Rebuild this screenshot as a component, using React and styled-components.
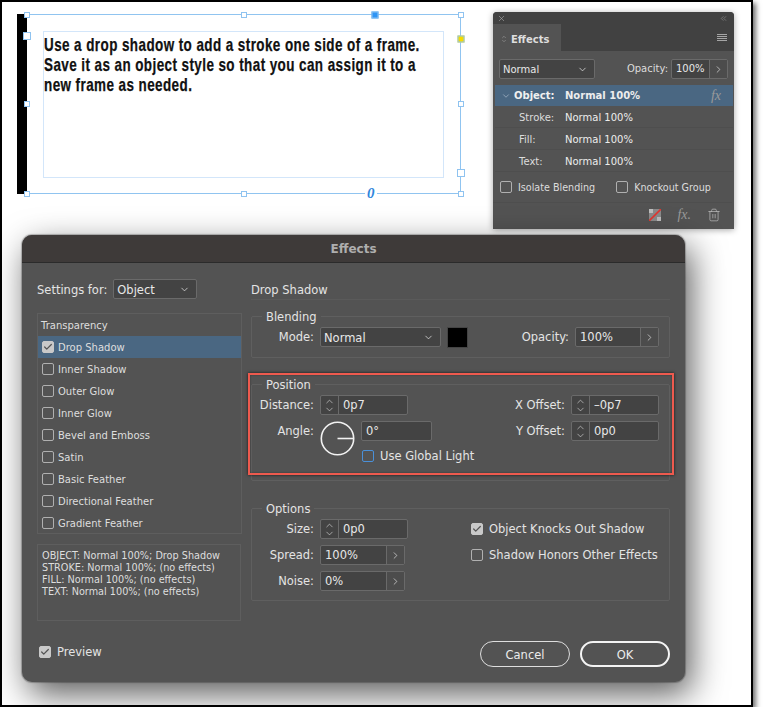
import React from 'react';
import styled, { createGlobalStyle } from 'styled-components';
import { ChevronDown, ChevronUp, ChevronRight, Check, Trash2, X, ChevronsLeft } from 'lucide-react';

const GlobalStyle = createGlobalStyle`
    html, body {
        margin: 0;
        padding: 0;
        background: #ffffff;
        overflow: hidden;
    }
    * {
        box-sizing: border-box;
    }
`;

const HANDLES = [
    { x: 0, y: 0 }, { x: 217, y: 0 }, { x: 434, y: 0 },
    { x: 0, y: 89 }, { x: 434, y: 89 },
    { x: 0, y: 179 }, { x: 217, y: 179 }, { x: 434, y: 179 },
    { x: 0, y: 21, size: 8 }, { x: 434, y: 158, size: 8 },
    { x: 348, y: 0, size: 7, fill: '#2f95f5' },
    { x: 434, y: 24, size: 7, fill: '#f5dc00' },
];

const EFFECT_ROWS = [
    { label: 'Drop Shadow', checked: true },
    { label: 'Inner Shadow' },
    { label: 'Outer Glow' },
    { label: 'Inner Glow' },
    { label: 'Bevel and Emboss' },
    { label: 'Satin' },
    { label: 'Basic Feather' },
    { label: 'Directional Feather' },
    { label: 'Gradient Feather' },
];

const Box = ({ checked, blue }) => (
    <CheckBox $checked={checked} $blue={blue}>
        {checked && <Check size={10} strokeWidth={3} color="#555" />}
    </CheckBox>
);

const Spinner = ({ value, width = 88 }) => (
    <FieldShell $width={width}>
        <SpinButtons>
            <ChevronUp size={11} strokeWidth={1.3} />
            <ChevronDown size={11} strokeWidth={1.3} />
        </SpinButtons>
        <FieldValue>{value}</FieldValue>
    </FieldShell>
);

const PercentField = ({ value, width, arrow = 18 }) => (
    <FieldShell $width={width}>
        <FieldValue>{value}</FieldValue>
        <ArrowButton $width={arrow}>
            <ChevronRight size={11} strokeWidth={1.5} />
        </ArrowButton>
    </FieldShell>
);

const Select = ({ value, width }) => (
    <SelectShell $width={width}>
        <span>{value}</span>
        <ChevronDown size={11} strokeWidth={1.6} />
    </SelectShell>
);

const App = () => {
    return (
        <>
            <GlobalStyle />
            <Frame>
                <TopRow>
                    <DocArea>
                        <StrokeBar />
                        <DocFrame>
                            <TextFrame>
                                <TextLine>Use a drop shadow to add a stroke one side of a frame.</TextLine>
                                <TextLine>Save it as an object style so that you can assign it to a</TextLine>
                                <TextLine>new frame as needed.</TextLine>
                            </TextFrame>
                            {HANDLES.map((h, i) => (
                                <Handle key={i} $x={h.x} $y={h.y} $size={h.size || 6} $fill={h.fill} />
                            ))}
                            <Overflow>0</Overflow>
                        </DocFrame>
                    </DocArea>

                    <Panel>
                        <PanelBar>
                            <X size={9} strokeWidth={1.5} />
                            <ChevronsLeft size={9} strokeWidth={1.2} />
                        </PanelBar>
                        <TabRow>
                            <Tab>
                                <TabSpin>
                                    <ChevronUp size={6} strokeWidth={2} />
                                    <ChevronDown size={6} strokeWidth={2} />
                                </TabSpin>
                                Effects
                            </Tab>
                            <MenuIcon><i /><i /><i /><i /></MenuIcon>
                        </TabRow>
                        <PanelControls>
                            <Select value="Normal" width={96} />
                            <OpacityLabel>Opacity:</OpacityLabel>
                            <PercentField value="100%" width={57} arrow={18} />
                        </PanelControls>
                        <LayerRow $active>
                            <ChevronDown size={10} strokeWidth={1.5} />
                            <LayerName $active>Object:</LayerName>
                            <LayerValue $active>Normal 100%</LayerValue>
                            <FxMark>fx</FxMark>
                        </LayerRow>
                        <LayerRow><LayerName $indent>Stroke:</LayerName><LayerValue>Normal 100%</LayerValue></LayerRow>
                        <LayerRow><LayerName $indent>Fill:</LayerName><LayerValue>Normal 100%</LayerValue></LayerRow>
                        <LayerRow><LayerName $indent>Text:</LayerName><LayerValue>Normal 100%</LayerValue></LayerRow>
                        <PanelChecks>
                            <CheckLine><Box /><span>Isolate Blending</span></CheckLine>
                            <CheckLine><Box /><span>Knockout Group</span></CheckLine>
                        </PanelChecks>
                        <PanelFooter>
                            <svg width="12" height="12" viewBox="0 0 12 12">
                                <rect width="12" height="12" fill="#8a8a8a" />
                                <rect x="0" y="0" width="4" height="4" fill="#bdbdbd" />
                                <rect x="8" y="8" width="4" height="4" fill="#bdbdbd" />
                                <path d="M0 12 L12 0" stroke="#e0352f" strokeWidth="1.6" />
                            </svg>
                            <FxMark $footer>fx.</FxMark>
                            <Trash2 size={14} strokeWidth={1.2} color="#bdbdbd" />
                        </PanelFooter>
                    </Panel>
                </TopRow>

                <Dialog>
                    <TitleBar>Effects</TitleBar>
                    <DialogBody>
                        <LeftColumn>
                            <SettingsRow>
                                <SettingsLabel>Settings for:</SettingsLabel>
                                <Select value="Object" width={84} />
                            </SettingsRow>
                            <EffectList>
                                <ListHeader>Transparency</ListHeader>
                                {EFFECT_ROWS.map((row) => (
                                    <EffectRow key={row.label} $active={row.checked}>
                                        <Box checked={row.checked} />
                                        <span>{row.label}</span>
                                    </EffectRow>
                                ))}
                            </EffectList>
                            <SummaryBox>
                                <div>OBJECT: Normal 100%; Drop Shadow</div>
                                <div>STROKE: Normal 100%; (no effects)</div>
                                <div>FILL: Normal 100%; (no effects)</div>
                                <div>TEXT: Normal 100%; (no effects)</div>
                            </SummaryBox>
                            <PreviewRow><Box checked /><span>Preview</span></PreviewRow>
                        </LeftColumn>

                        <RightColumn>
                            <SectionTitle>Drop Shadow</SectionTitle>

                            <Group $height={49}>
                                <legend>Blending</legend>
                                <FieldRow>
                                    <FieldLabel>Mode:</FieldLabel>
                                    <Select value="Normal" width={121} />
                                    <Swatch />
                                    <RightSide>
                                        <FieldLabel $auto>Opacity:</FieldLabel>
                                        <PercentField value="100%" width={84} />
                                    </RightSide>
                                </FieldRow>
                            </Group>

                            <Group $height={104} $mt={19}>
                                <legend>Position</legend>
                                <FieldRow>
                                    <FieldLabel>Distance:</FieldLabel>
                                    <Spinner value="0p7" />
                                    <RightSide>
                                        <FieldLabel $auto>X Offset:</FieldLabel>
                                        <Spinner value="–0p7" />
                                    </RightSide>
                                </FieldRow>
                                <AngleRow>
                                    <FieldLabel>Angle:</FieldLabel>
                                    <svg width="35" height="35" viewBox="0 0 35 35">
                                        <circle cx="17.5" cy="17.5" r="16.2" fill="none" stroke="#f2f2f2" strokeWidth="1.6" />
                                        <path d="M17.5 17.5 H34" stroke="#f2f2f2" strokeWidth="1.6" />
                                    </svg>
                                    <AngleColumn>
                                        <FieldShell $width={71}><FieldValue>0°</FieldValue></FieldShell>
                                        <GlobalLight><Box blue /><span>Use Global Light</span></GlobalLight>
                                    </AngleColumn>
                                    <RightSide>
                                        <FieldLabel $auto>Y Offset:</FieldLabel>
                                        <Spinner value="0p0" />
                                    </RightSide>
                                </AngleRow>
                                <RedOutline />
                            </Group>

                            <Group $height={100} $mt={20}>
                                <legend>Options</legend>
                                <OptionsGrid>
                                    <OptionFields>
                                        <FieldRow>
                                            <FieldLabel>Size:</FieldLabel>
                                            <Spinner value="0p0" />
                                        </FieldRow>
                                        <FieldRow>
                                            <FieldLabel>Spread:</FieldLabel>
                                            <PercentField value="100%" width={85} />
                                        </FieldRow>
                                        <FieldRow>
                                            <FieldLabel>Noise:</FieldLabel>
                                            <PercentField value="0%" width={85} />
                                        </FieldRow>
                                    </OptionFields>
                                    <OptionChecks>
                                        <CheckLine $gap={6}><Box checked /><span>Object Knocks Out Shadow</span></CheckLine>
                                        <CheckLine $gap={6}><Box /><span>Shadow Honors Other Effects</span></CheckLine>
                                    </OptionChecks>
                                </OptionsGrid>
                            </Group>

                            <ButtonRow>
                                <PillButton>Cancel</PillButton>
                                <PillButton $primary>OK</PillButton>
                            </ButtonRow>
                        </RightColumn>
                    </DialogBody>
                </Dialog>
            </Frame>
        </>
    );
};

// Styled Components
const Frame = styled.div`
    width: 753px;
    height: 707px;
    border: 2px solid #000;
    background: #fff;
    padding: 10px 0 0 15px;
    box-shadow: 3px 3px 5px rgba(0, 0, 0, 0.55);
    font-family: "DejaVu Sans", "Liberation Sans", sans-serif;
    font-size: 11px;
    color: #e4e4e4;
`;

const TopRow = styled.div`
    display: flex;
    align-items: flex-start;
    gap: 32px;
`;

const DocArea = styled.div`
    display: flex;
    margin-top: 2px;
`;

const StrokeBar = styled.div`
    width: 10px;
    height: 180px;
    background: #000;
`;

const DocFrame = styled.div`
    position: relative;
    width: 434px;
    height: 180px;
    border: 1px solid #90c4f0;
    border-left: 0;
    padding: 16px 16px 15px 16px;
`;

const TextFrame = styled.div`
    height: 100%;
    border: 1px solid #d3e6fa;
    padding: 3px 0 0 0;
    font-family: "Liberation Sans", sans-serif;
    font-weight: 700;
    font-size: 19px;
    line-height: 20px;
    letter-spacing: 0.6px;
    color: #111;
    -webkit-text-stroke: 0.25px #111;
`;

const TextLine = styled.div`
    white-space: nowrap;
    transform: scaleX(0.708);
    transform-origin: left center;
`;

const Handle = styled.div`
    position: absolute;
    left: ${(p) => p.$x}px;
    top: ${(p) => p.$y}px;
    width: ${(p) => p.$size}px;
    height: ${(p) => p.$size}px;
    transform: translate(-50%, -50%);
    background: ${(p) => p.$fill || '#fff'};
    border: 1px solid #8fc3f0;
`;

const Overflow = styled.div`
    position: absolute;
    left: 338px;
    bottom: -7px;
    padding: 0 2px;
    background: #fff;
    font-family: "Liberation Serif", serif;
    font-style: italic;
    font-weight: 700;
    font-size: 15px;
    line-height: 13px;
    color: #2f86dc;
`;

const Panel = styled.div`
    width: 241px;
    height: 217px;
    background: #535353;
    border-radius: 4px 4px 0 0;
    box-shadow: 0 1px 6px rgba(0, 0, 0, 0.35);
    font-size: 10px;
    overflow: hidden;
`;

const PanelBar = styled.div`
    height: 12px;
    background: #414141;
    display: flex;
    align-items: center;
    justify-content: space-between;
    padding: 0 6px 0 4px;
    color: #b0b0b0;
`;

const TabRow = styled.div`
    height: 27px;
    background: #414141;
    display: flex;
    align-items: center;
    justify-content: space-between;
    padding-right: 7px;
`;

const Tab = styled.div`
    width: 68px;
    height: 100%;
    background: #535353;
    display: flex;
    align-items: center;
    gap: 4px;
    padding: 3px 0 0 8px;
    font-size: 10px;
    font-weight: 700;
    color: #dedede;
`;

const TabSpin = styled.span`
    display: flex;
    flex-direction: column;
    color: #aaa;
    & svg { display: block; margin: -1px 0; }
`;

const MenuIcon = styled.div`
    display: flex;
    flex-direction: column;
    gap: 1px;
    & i {
        display: block;
        width: 10px;
        height: 1px;
        background: #a5a5a5;
    }
`;

const PanelControls = styled.div`
    height: 34px;
    padding: 8px 6px 6px 6px;
    display: flex;
    align-items: flex-start;
`;

const OpacityLabel = styled.span`
    margin: 4px 3px 0 auto;
    color: #dcdcdc;
`;

const LayerRow = styled.div`
    width: 238px;
    margin-left: 2px;
    height: ${(p) => (p.$active ? 21 : 22)}px;
    display: flex;
    align-items: center;
    padding: ${(p) => (p.$active ? 0 : 1)}px 0 0 6px;
    background: ${(p) => (p.$active ? '#4a6782' : 'transparent')};
    border-bottom: ${(p) => (p.$active ? '0' : '1px solid #4e4e4e')};
    color: #b9c6d3;
`;

const LayerName = styled.span`
    width: ${(p) => (p.$indent ? 46 : 51)}px;
    margin-left: ${(p) => (p.$indent ? 18 : 3)}px;
    font-weight: ${(p) => (p.$active ? 700 : 400)};
    color: ${(p) => (p.$active ? '#f0f0f0' : '#dcdcdc')};
    flex-shrink: 0;
`;

const LayerValue = styled.span`
    font-weight: ${(p) => (p.$active ? 700 : 400)};
    color: #ededed;
`;

const FxMark = styled.span`
    margin-left: ${(p) => (p.$footer ? 0 : 'auto')};
    margin-right: ${(p) => (p.$footer ? 0 : '12px')};
    font-family: "Liberation Serif", serif;
    font-style: italic;
    font-size: 14px;
    color: #9a9a9a;
`;

const PanelChecks = styled.div`
    height: 31px;
    display: flex;
    align-items: center;
    gap: 21px;
    padding-left: 7px;
    border-bottom: 1px solid #4e4e4e;
    margin: 0 2px 0 0;
    font-size: 9.6px;
    color: #dcdcdc;
`;

const PanelFooter = styled.div`
    height: 24px;
    display: flex;
    align-items: center;
    justify-content: flex-end;
    gap: 16px;
    padding-right: 13px;
`;

const CheckLine = styled.label`
    display: flex;
    align-items: center;
    gap: ${(p) => p.$gap || 6}px;
`;

const CheckBox = styled.span`
    width: 12px;
    height: 12px;
    flex-shrink: 0;
    border-radius: 2px;
    display: inline-flex;
    align-items: center;
    justify-content: center;
    background: ${(p) => (p.$checked ? '#c9c9c9' : 'transparent')};
    border: 1px solid ${(p) => (p.$checked ? '#c9c9c9' : p.$blue ? '#4a90d9' : '#b0b0b0')};
`;

const Dialog = styled.div`
    width: 663px;
    height: 447px;
    margin: 6px 0 0 5px;
    position: relative;
    background: #535353;
    border-radius: 10px;
    box-shadow: 0 0 1px 1px rgba(0, 0, 0, 0.25), 6px 12px 34px rgba(0, 0, 0, 0.65);
`;

const TitleBar = styled.div`
    height: 28px;
    background: #3e3a39;
    border-radius: 10px 10px 0 0;
    border-bottom: 1px solid #2b2b2b;
    display: flex;
    align-items: center;
    justify-content: center;
    font-weight: 700;
    font-size: 12px;
    color: #aeaeae;
`;

const DialogBody = styled.div`
    display: grid;
    grid-template-columns: 205px 419px;
    column-gap: 9px;
    padding: 16px 0 0 15px;
`;

const LeftColumn = styled.div`
    display: flex;
    flex-direction: column;
`;

const SettingsRow = styled.div`
    height: 20px;
    display: flex;
    align-items: center;
    gap: 6px;
    font-size: 11.5px;
    margin-bottom: 14px;
`;

const SettingsLabel = styled.span`
    padding-top: 1px;
`;

const EffectList = styled.div`
    height: 221px;
    border: 1px solid #5e5e5e;
    font-size: 10px;
`;

const ListHeader = styled.div`
    height: 22px;
    display: flex;
    align-items: center;
    padding-left: 3px;
    color: #dedede;
`;

const EffectRow = styled.div`
    height: 22px;
    display: flex;
    align-items: center;
    gap: 4px;
    padding-left: 4px;
    background: ${(p) => (p.$active ? '#4a6782' : 'transparent')};
    color: #dedede;
`;

const SummaryBox = styled.div`
    height: 77px;
    margin-top: 10px;
    width: 204px;
    border: 1px solid #5e5e5e;
    padding: 5px 4px;
    font-size: 9.7px;
    line-height: 12px;
    color: #dedede;
`;

const PreviewRow = styled.div`
    margin-top: 21px;
    height: 18px;
    padding: 1px 0 0 2px;
    display: flex;
    align-items: center;
    gap: 6px;
    font-size: 11.5px;
`;

const RightColumn = styled.div`
    display: flex;
    flex-direction: column;
`;

const SectionTitle = styled.div`
    height: 21px;
    margin-bottom: 9px;
    padding-top: 1px;
    display: flex;
    align-items: center;
    border-bottom: 1px solid #5a5a5a;
    font-size: 11.5px;
    color: #e4e4e4;
`;

const Group = styled.fieldset`
    position: relative;
    margin: ${(p) => p.$mt || 0}px 0 0 0;
    padding: 3px 10px 0 0;
    height: ${(p) => p.$height}px;
    min-width: 0;
    border: 1px solid #5f5f5f;
    border-radius: 2px;
    & > legend {
        margin-left: 10px;
        padding: 0 4px;
        height: 15px;
        line-height: 17px;
        font-size: 11.5px;
        color: #e4e4e4;
    }
`;

const FieldRow = styled.div`
    display: flex;
    align-items: center;
    height: 20px;
    font-size: 11.5px;
`;

const AngleRow = styled.div`
    display: flex;
    align-items: flex-start;
    margin-top: 6px;
    font-size: 11.5px;
    line-height: 20px;
`;

const FieldLabel = styled.span`
    width: ${(p) => (p.$auto ? 'auto' : '62px')};
    margin-right: 6px;
    text-align: right;
    flex-shrink: 0;
    color: #e4e4e4;
`;

const FieldShell = styled.div`
    width: ${(p) => p.$width}px;
    height: 20px;
    display: flex;
    align-items: stretch;
    background: #434343;
    border: 1px solid #6a6a6a;
    border-radius: 2px;
    flex-shrink: 0;
    line-height: 18px;
`;

const SpinButtons = styled.span`
    width: 18px;
    display: flex;
    flex-direction: column;
    align-items: center;
    justify-content: center;
    border-right: 1px solid #6a6a6a;
    color: #e4e4e4;
    & svg { display: block; margin: -1.5px 0; }
`;

const FieldValue = styled.span`
    flex: 1;
    padding-left: 4px;
    color: #e8e8e8;
`;

const ArrowButton = styled.span`
    width: ${(p) => p.$width}px;
    display: flex;
    align-items: center;
    justify-content: center;
    border-left: 1px solid #6a6a6a;
    background: #4c4c4c;
    color: #e4e4e4;
`;

const SelectShell = styled.div`
    width: ${(p) => p.$width}px;
    height: 20px;
    display: flex;
    align-items: center;
    justify-content: space-between;
    padding: 1px 6px 0 3px;
    background: #434343;
    border: 1px solid #6a6a6a;
    border-radius: 2px;
    flex-shrink: 0;
    color: #e8e8e8;
`;

const Swatch = styled.div`
    width: 21px;
    height: 21px;
    margin-left: 6px;
    background: #000;
    border: 1px solid #444;
`;

const RightSide = styled.div`
    margin-left: auto;
    display: flex;
    align-items: center;
`;

const AngleColumn = styled.div`
    margin-left: 6px;
    display: flex;
    flex-direction: column;
`;

const GlobalLight = styled.div`
    display: flex;
    align-items: center;
    gap: 6px;
    margin-top: 6px;
    height: 18px;
    padding-left: 1px;
`;

const RedOutline = styled.div`
    position: absolute;
    left: -4px;
    top: -19px;
    width: 426px;
    height: 102px;
    border: 2px solid #ee5a4e;
    box-shadow: 0 0 3px rgba(0, 0, 0, 0.7), inset 0 0 2px rgba(0, 0, 0, 0.4);
    pointer-events: none;
`;

const OptionsGrid = styled.div`
    display: flex;
    justify-content: space-between;
    font-size: 11.5px;
`;

const OptionFields = styled.div`
    display: flex;
    flex-direction: column;
    gap: 6px;
`;

const OptionChecks = styled.div`
    width: 188px;
    display: flex;
    flex-direction: column;
    gap: 6px;
    white-space: nowrap;
    & > label {
        height: 20px;
    }
`;

const ButtonRow = styled.div`
    display: flex;
    justify-content: flex-end;
    gap: 10px;
    margin-top: 40px;
`;

const PillButton = styled.button`
    width: 90px;
    height: 26px;
    padding: 1px 0 0 0;
    background: transparent;
    color: #ececec;
    font-family: inherit;
    font-size: 11.5px;
    font-weight: 400;
    border-radius: 13px;
    border: ${(p) => (p.$primary ? '2px solid #f4f4f4' : '1px solid #dedede')};
`;

export default App;
